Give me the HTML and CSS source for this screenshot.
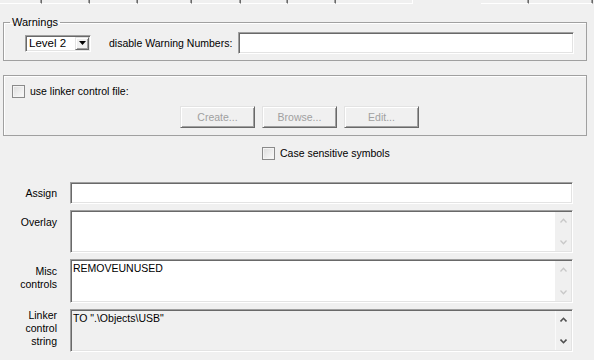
FILE: index.html
```html
<!DOCTYPE html>
<html>
<head>
<meta charset="utf-8">
<link rel="stylesheet" href="styles.css">
</head>
<body>
<div class="tabs">
  <span class="tab w42"></span><span class="tab w48"></span><span class="tab w48"></span><span class="tab w54"></span><span class="tab w49"></span><span class="tab w47"></span><span class="tab w48"></span><span class="tab w76 nosep"></span><span class="tab-sel"></span><span class="tab w48"></span><span class="tab w64"></span><span class="tab-rest"></span>
</div>

<fieldset class="group">
  <legend class="legend">Warnings</legend>
  <div class="warn-row">
    <div class="select">
      <span class="select-text">Level 2</span>
      <span class="select-btn"><svg width="7" height="4" viewBox="0 0 7 4"><polygon points="0,0 7,0 3.5,4" fill="#000"/></svg></span>
    </div>
    <span class="warn-label">disable Warning Numbers:</span>
    <div class="edit grow"></div>
  </div>
</fieldset>

<div class="group2">
  <label class="check-row">
    <span class="check"></span>
    <span>use linker control file:</span>
  </label>
  <div class="btn-row">
    <span class="btn">Create...</span>
    <span class="btn">Browse...</span>
    <span class="btn">Edit...</span>
  </div>
</div>

<label class="check-row case-row">
  <span class="check"></span>
  <span>Case sensitive symbols</span>
</label>

<div class="form">
  <div class="flabel center">Assign</div>
  <div class="edit h22"></div>

  <div class="flabel top6">Overlay</div>
  <div class="edit box h43">
    <div class="text"></div>
    <div class="scroll">
      <svg width="7" height="5" viewBox="0 0 7 5"><path d="M0.5 4.5 L3.5 1.3 L6.5 4.5" fill="none" stroke="#c8c8c8" stroke-width="1.3"/></svg>
      <svg width="7" height="5" viewBox="0 0 7 5"><path d="M0.5 0.5 L3.5 3.7 L6.5 0.5" fill="none" stroke="#c8c8c8" stroke-width="1.3"/></svg>
    </div>
  </div>

  <div class="flabel top6">Misc<br>controls</div>
  <div class="edit box h44">
    <div class="text">REMOVEUNUSED</div>
    <div class="scroll">
      <svg width="7" height="5" viewBox="0 0 7 5"><path d="M0.5 4.5 L3.5 1.3 L6.5 4.5" fill="none" stroke="#c8c8c8" stroke-width="1.3"/></svg>
      <svg width="7" height="5" viewBox="0 0 7 5"><path d="M0.5 0.5 L3.5 3.7 L6.5 0.5" fill="none" stroke="#c8c8c8" stroke-width="1.3"/></svg>
    </div>
  </div>

  <div class="flabel top0">Linker<br>control<br>string</div>
  <div class="edit box h43 readonly">
    <div class="text">TO ".\Objects\USB"</div>
    <div class="scroll">
      <svg width="7" height="5" viewBox="0 0 7 5"><path d="M0.5 4.5 L3.5 1.3 L6.5 4.5" fill="none" stroke="#505050" stroke-width="1.6"/></svg>
      <svg width="7" height="5" viewBox="0 0 7 5"><path d="M0.5 0.5 L3.5 3.7 L6.5 0.5" fill="none" stroke="#505050" stroke-width="1.6"/></svg>
    </div>
  </div>
</div>
</body>
</html>
```

FILE: styles.css
```css
* { box-sizing: border-box; }

html, body {
  margin: 0;
  padding: 0;
  background: #f0f0f0;
  font-family: "Liberation Sans", Arial, sans-serif;
  font-size: 10.5px;
  line-height: 13px;
  color: #000;
}

/* tab strip bottom */
.tabs {
  display: flex;
  height: 4px;
}
.tab {
  height: 4px;
  border-right: 1px solid #696969;
  border-bottom: 1px solid #fff;
  box-shadow: inset -2px 0 0 -1px #a0a0a0;
}
.tab.nosep { border-right: none; box-shadow: none; }
.w42 { width: 42px; }
.w47 { width: 47px; }
.w48 { width: 48px; }
.w49 { width: 49px; }
.w54 { width: 54px; }
.w64 { width: 64px; }
.w76 { width: 76px; }
.tab-sel {
  width: 69px;
  height: 4px;
  border-left: 1px solid #fff;
}
.tab-rest { flex: 1; height: 4px; }

/* group boxes */
.group {
  margin: 12px 7px 0 3px;
  padding: 3px 12px 6px 6px;
  border: 1px solid #a0a0a0;
  box-shadow: inset 1px 1px 0 #fff;
  min-width: 0;
}
.legend {
  padding: 0 2px;
  line-height: 13px;
  font-size: 11px;
}

.warn-row {
  display: flex;
  align-items: center;
  margin-left: 15px;
}
.warn-label {
  margin: 0 6px 0 18px;
  white-space: nowrap;
}
.grow { flex: 1; height: 22px; }

/* sunken edit */
.edit {
  background: #fff;
  border: 1px solid;
  border-color: #a0a0a0 #fff #fff #a0a0a0;
  box-shadow: inset 1px 1px 0 #696969, inset -1px -1px 0 #e3e3e3;
}

/* combo box */
.select {
  width: 66px;
  height: 17px;
  display: flex;
  align-items: stretch;
  background: #fff;
  border: 1px solid;
  border-color: #a0a0a0 #fff #fff #a0a0a0;
  box-shadow: inset 1px 1px 0 #696969, inset -1px -1px 0 #e3e3e3;
  padding: 1px;
}
.select-text {
  flex: 1;
  padding-left: 2px;
  line-height: 13px;
  font-size: 11.5px;
}
.select-btn {
  width: 14px;
  display: flex;
  align-items: center;
  justify-content: center;
  background: #f0f0f0;
  border: 1px solid;
  border-color: #e3e3e3 #696969 #696969 #e3e3e3;
  box-shadow: inset 1px 1px 0 #fff, inset -1px -1px 0 #a0a0a0;
}

.group2 {
  margin: 14px 7px 0 3px;
  padding: 9px 0 7px 8px;
  border: 1px solid #a0a0a0;
  box-shadow: inset 1px 1px 0 #fff;
}

.check-row {
  display: flex;
  align-items: center;
  gap: 5px;
}
.check {
  width: 13px;
  height: 13px;
  flex: none;
  border: 1px solid #8a8a8a;
  background: linear-gradient(135deg, #dcdcdc, #fbfbfb);
  box-shadow: inset 0 0 0 1px #f4f4f4;
}

.btn-row {
  display: flex;
  gap: 7px;
  margin: 8px 0 0 168px;
}
.btn {
  width: 75px;
  height: 22px;
  display: flex;
  align-items: center;
  justify-content: center;
  color: #a0a0a0;
  background: #f0f0f0;
  border: 1px solid;
  border-color: #e3e3e3 #696969 #696969 #e3e3e3;
  box-shadow: inset 1px 1px 0 #fff, inset -1px -1px 0 #a0a0a0;
}

.case-row {
  margin: 11px 0 0 262px;
}

/* label/field grid */
.form {
  display: grid;
  grid-template-columns: 57px 1fr;
  column-gap: 13px;
  row-gap: 6px;
  margin: 22px 21px 0 0;
}
.flabel {
  text-align: right;
  line-height: 13px;
}
.flabel.center { align-self: center; }
.flabel.top6 { padding-top: 6px; }
.flabel.top0 { padding-top: 0; }

.h22 { height: 22px; }
.h43 { height: 43px; }
.h44 { height: 44px; }

.box {
  display: flex;
  padding: 1px;
}
.text {
  flex: 1;
  padding: 1px 1px;
  line-height: 13px;
  white-space: pre;
}
.scroll {
  width: 16px;
  display: flex;
  flex-direction: column;
  justify-content: space-between;
  align-items: center;
  padding: 6px 0 6px;
  background: #f0f0f0;
}
.readonly {
  background: #f0f0f0;
}
.readonly .scroll {
  border-left: 1px solid #fafafa;
}
```
